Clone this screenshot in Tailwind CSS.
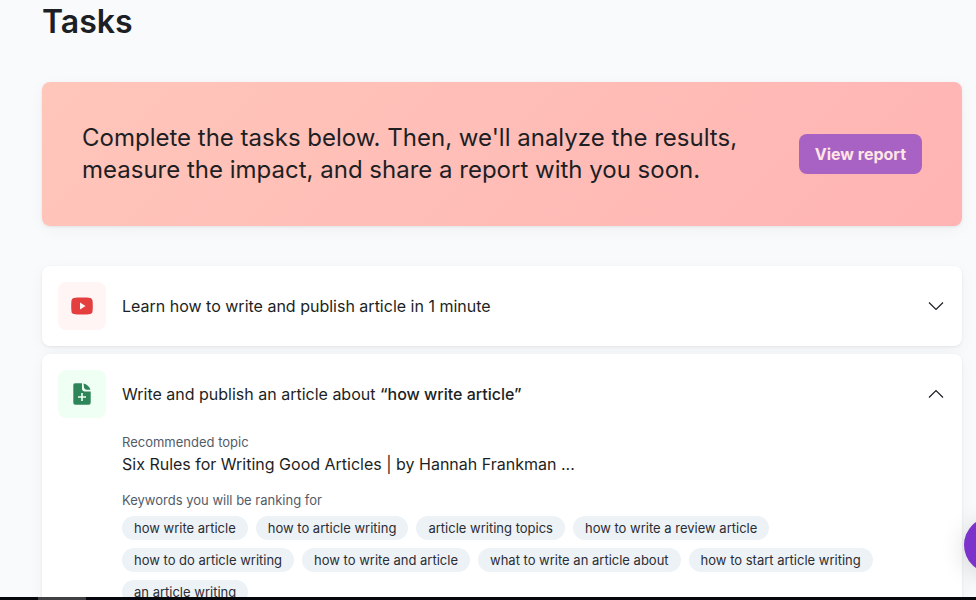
<!DOCTYPE html>
<html lang="en">
<head>
    <meta charset="UTF-8">
    <meta name="viewport" content="width=device-width, initial-scale=1.0">
    <title>Tasks</title>
    <script src="https://cdn.jsdelivr.net/npm/@tailwindcss/browser@4"></script>
</head>
<body class="h-screen flex flex-col overflow-hidden bg-[#f9fafc] text-[#1d1f24] font-['Inter',sans-serif]">
    <div class="relative flex-1 min-h-0 overflow-hidden">
        <main class="pl-[42px] pr-[14px] pt-0.5">
            <h1 class="text-[32px] leading-10 font-semibold">Tasks</h1>

            <!-- Report banner -->
            <section class="mt-10 p-10 flex items-center justify-between gap-10 rounded-lg bg-linear-135 from-[#ffc6ba] to-[#ffb4b4] shadow-[0_1px_3px_rgba(0,0,0,0.07),0_4px_16px_rgba(0,0,0,0.04)]">
                <p class="text-2xl leading-8">Complete the tasks below. Then, we'll analyze the results, measure the impact, and share a report with you soon.</p>
                <button type="button" class="shrink-0 h-10 px-4 rounded-lg bg-[#a862c3] text-[#ffe6e6] text-base font-bold">View report</button>
            </section>

            <div class="mt-10 space-y-2">
                <section class="p-4 rounded-lg bg-white shadow-[0_1px_3px_rgba(0,0,0,0.07),0_4px_16px_rgba(0,0,0,0.04)]">
                    <button type="button" aria-expanded="false" class="w-full flex items-center gap-4 text-left">
                        <span class="size-12 shrink-0 flex items-center justify-center rounded-lg bg-[#fff5f5]">
                            <svg class="size-6" viewBox="0 0 24 24" fill="none">
                                <path fill="#e53e3e" d="M12 3.500c3.500 0 6.500.1 8.100.5 1.400.3 2.200 1.300 2.400 2.600.2 1.500.3 3.200.3 5.400s-.1 3.900-.3 5.400c-.2 1.300-1 2.300-2.400 2.600-1.600.4-4.600.5-8.100.5s-6.500-.1-8.100-.5c-1.400-.3-2.200-1.300-2.400-2.600C1.300 15.900 1.200 14.200 1.200 12s.1-3.900.3-5.400C1.700 5.300 2.500 4.300 3.900 4c1.600-.4 4.600-.5 8.100-.5z"/>
                                <path fill="#fff5f5" d="M10 8.500v7l5.500-3.500z"/>
                            </svg>
                        </span>
                        <span class="flex-1 text-base">Learn how to write and publish article in 1 minute</span>
                        <svg class="size-5 shrink-0" viewBox="0 0 20 20" fill="none" stroke="currentColor" stroke-width="1.2">
                            <path d="M3 6.500l7 7 7-7"/>
                        </svg>
                    </button>
                </section>

                <section class="p-4 rounded-lg bg-white shadow-[0_1px_3px_rgba(0,0,0,0.07),0_4px_16px_rgba(0,0,0,0.04)]">
                    <button type="button" aria-expanded="true" class="w-full flex items-center gap-4 text-left">
                        <span class="size-12 shrink-0 flex items-center justify-center rounded-lg bg-[#f0fff4]">
                            <svg class="size-6" viewBox="0 0 24 24" fill="none">
                                <path fill="#2f855a" d="M5 1.300h7v5.200A3 3 0 0 0 15 9.500h5.700v11.200a2 2 0 0 1-2 2H5.300a2 2 0 0 1-2-2V3a1.700 1.700 0 0 1 1.700-1.700z"/>
                                <path fill="#2f855a" d="M13.500 1.500c3.200.6 6 3.200 7 6.300h-4a3 3 0 0 1-2.400-1.800z"/>
                                <path stroke="#f0fff4" stroke-width="1.600" d="M12 11v8M8 15h8"/>
                            </svg>
                        </span>
                        <span class="flex-1 text-base">Write and publish an article about <strong class="font-medium">“how write article”</strong></span>
                        <svg class="size-5 shrink-0" viewBox="0 0 20 20" fill="none" stroke="currentColor" stroke-width="1.2">
                            <path d="M3 13.500l7-7 7 7"/>
                        </svg>
                    </button>

                    <div class="mt-4 pl-16">
                        <h2 class="text-[13px] leading-4 text-[#525c68]">Recommended topic</h2>
                        <p class="mt-0.5 text-base">Six Rules for Writing Good Articles | by Hannah Frankman ...</p>
                        <h2 class="mt-4 text-[13px] leading-4 text-[#525c68]">Keywords you will be ranking for</h2>
                        <ul class="mt-2 flex flex-wrap gap-2 text-[13px] leading-6 text-[#2a2d33]">
                            <li class="px-3 rounded-full bg-[#edf2f7]">how write article</li>
                            <li class="px-3 rounded-full bg-[#edf2f7]">how to article writing</li>
                            <li class="px-3 rounded-full bg-[#edf2f7]">article writing topics</li>
                            <li class="px-3 rounded-full bg-[#edf2f7]">how to write a review article</li>
                            <li class="px-3 rounded-full bg-[#edf2f7]">how to do article writing</li>
                            <li class="px-3 rounded-full bg-[#edf2f7]">how to write and article</li>
                            <li class="px-3 rounded-full bg-[#edf2f7]">what to write an article about</li>
                            <li class="px-3 rounded-full bg-[#edf2f7]">how to start article writing</li>
                            <li class="px-3 rounded-full bg-[#edf2f7]">an article writing</li>
                        </ul>
                    </div>
                </section>
            </div>
        </main>

        <!-- Chat launcher, tucked into the right edge -->
        <button type="button" aria-label="Open chat" class="absolute -right-11 bottom-6 size-14 rounded-full bg-[#7b33cc] shadow-[0_4px_24px_rgba(0,0,0,0.15)]"></button>
    </div>

    <div class="h-[3px] shrink-0 bg-[#05070d]">
        <div class="ml-[38px] w-12 h-full bg-[#404042]"></div>
    </div>
</body>
</html>
